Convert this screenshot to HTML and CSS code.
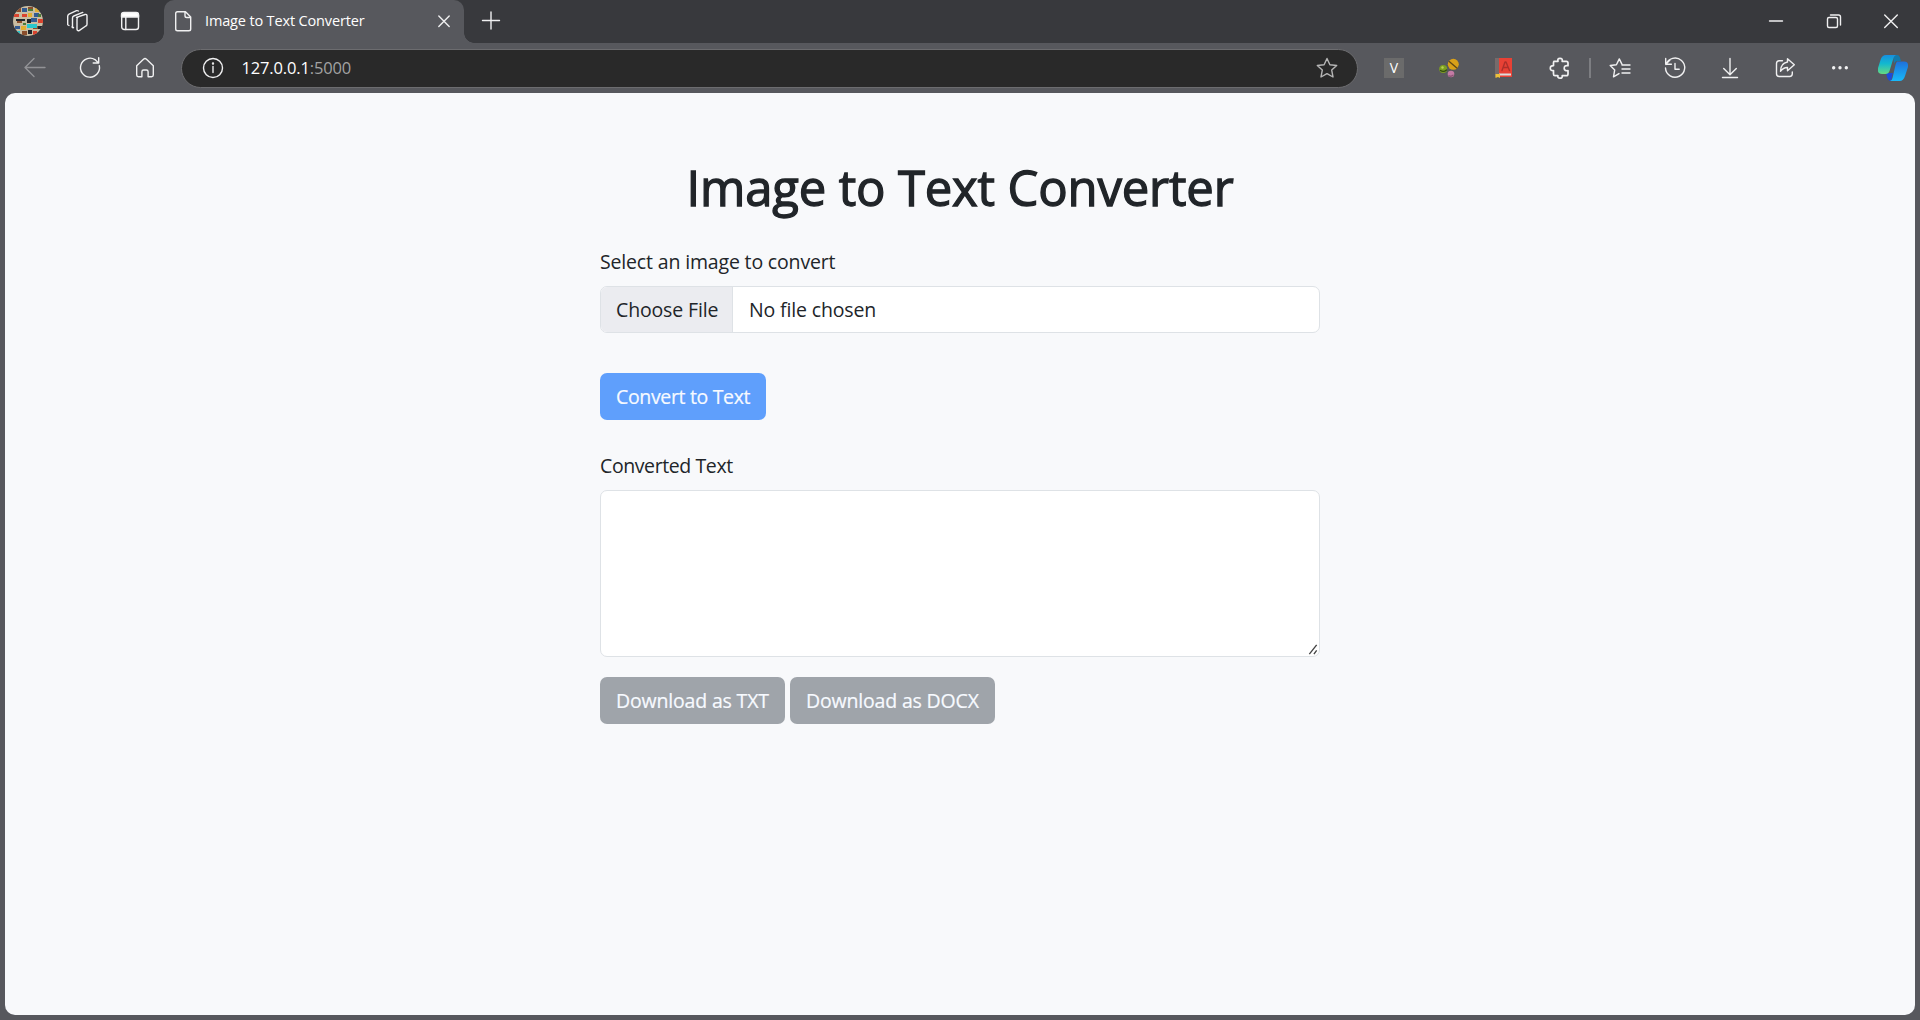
FILE: index.html
```html
<!DOCTYPE html>
<html lang="en">
<head>
<meta charset="utf-8">
<title>Image to Text Converter</title>
<link rel="stylesheet" href="styles.css">
</head>
<body>
<header class="tabstrip">
  <div class="tools">
    <span class="cell avatar-cell"><svg class="avatar" viewBox="0 0 30 30"><defs><clipPath id="round"><circle cx="15" cy="15" r="15"/></clipPath></defs><g clip-path="url(#round)"><path fill="#c9bda2" d="M0 0h30v30H0z"/><path fill="#8a4d2b" d="M3 2h5v4H3zM15 1h5v4h-5zM4 13h5v4H4zM20 20h5v3h-5zM9 25h5v4H9z"/><path fill="#345b91" d="M9 2h5v4H9zM21 7h5v4h-5zM2 20h5v3H2zM18 12h6v4h-6z"/><path fill="#db432e" d="M9 8h5v3H9zM1 8h5v3H1zM25 13h5v4h-5zM20 25h4v4h-4z"/><path fill="#e2ae31" d="M15 7h4v4h-4zM8 20h5v4H8zM22 2h4v4h-4z"/><path fill="#29c6cd" d="M14 18h10v4H14zM3 25h4v3H3z"/><path fill="#20252b" d="M3 13h9v2H3zM14 13h4v4h-4zM15 24h4v4h-4zM25 20h4v3h-4z"/><path fill="#4b7b37" d="M15 3h5v2h-5zM10 17h3v2h-3zM25 8h3v3h-3z"/></g></svg></span>
    <span class="cell"><svg class="icon" viewBox="0 0 24 24"><path d="M11.5 8.3 20 5.500q2-.5 2 1.300v8.400q0 1.200-1.200 1.800l-6.300 4.300q-2 1.200-2.500-1V10q0-1.200 1-1.800M8.200 18.800l-.7-.5V9q0-1.500 1.300-2l9-3.600M4 16.500l-1.300-.8V7.300q0-1.500 1.300-2.200L11.500 1.700q1-.3 2 .3M8.500 18.500q-1 .5-1.500-.5"/></svg></span>
    <span class="cell"><svg class="icon" viewBox="0 0 24 24"><rect x="3.700" y="3.700" width="16.800" height="16.800" rx="2.500"/><path class="solid" d="M3.500 8V6q0-2.500 2.500-2.500h12q2.500 0 2.500 2.500v2z"/><path d="M7.800 8v12.500"/></svg></span>
  </div>
  <div class="tab">
    <svg class="icon" viewBox="0 0 24 24"><path d="M6.500 2.700h8l5.200 5.200v12q0 1.800-1.800 1.800H6.500q-1.800 0-1.800-1.800V4.500q0-1.800 1.800-1.800zM14 2.700v4q0 1.800 1.800 1.800h3.900"/></svg>
    <span class="tab-title">Image to Text Converter</span>
    <svg class="icon tab-close" viewBox="0 0 24 24"><path d="m6.800 7 10.400 10.400M17.200 7 6.800 17.400"/></svg>
  </div>
  <svg class="icon new-tab" viewBox="0 0 24 24"><path d="M3.500 11.500h17M12 3v17"/></svg>
  <div class="window-buttons">
    <svg class="icon" viewBox="0 0 24 24"><path d="M5.500 12h13"/></svg>
    <svg class="icon" viewBox="0 0 24 24"><rect x="5.500" y="8.500" width="10" height="10" rx="1.500"/><path d="M8.500 6h8q2 0 2 2v8"/></svg>
    <svg class="icon" viewBox="0 0 24 24"><path d="m5.700 5.900 12.600 12.600M18.300 5.900 5.700 18.500"/></svg>
  </div>
</header>
<nav class="toolbar">
  <span class="cell"><svg class="icon dim" viewBox="0 0 24 24"><path d="M22 11.500H3M11 2.500l-9 9 9 9"/></svg></span>
  <span class="cell"><svg class="icon" viewBox="0 0 24 24"><path d="M21.300 9.700A9.500 9.500 0 1 1 17 3.600L20.500 7M20.700 1.700V7h-5.500"/></svg></span>
  <span class="cell"><svg class="icon" viewBox="0 0 24 24"><path d="m3.700 9.700 6.800-6.500q1.500-1.300 3 0l6.800 6.500V19q0 1.700-1.700 1.700h-3.500v-5q0-1.700-1.700-1.700h-2.800q-1.700 0-1.700 1.700v5H5.400q-1.700 0-1.700-1.700z"/></svg></span>
  <div class="address">
    <svg class="icon" viewBox="0 0 24 24"><circle cx="12" cy="12" r="9.500"/><path d="M12 10.500v6"/><circle class="solid" cx="12" cy="7.500" r=".5"/></svg>
    <span class="url">127.0.0.1<span class="port">:5000</span></span>
    <svg class="icon star" viewBox="0 0 24 24"><path d="m12 2.500 2.900 6.200 6.800.8-5 4.600 1.300 6.900-6-3.400L6 21l1.300-6.900-5-4.600 6.800-.8z"/></svg>
  </div>
  <span class="cell"><span class="v-badge">V</span></span>
  <span class="cell"><svg class="icon art" viewBox="0 0 24 24"><circle cx="16.300" cy="8.300" r="5.500" fill="#daa018"/><path d="m12.200 5.500 7.600 6.500" stroke="#604816"/><circle cx="6.200" cy="13" r="4" fill="#7d9e20"/><path d="M3.500 14.500q3 2 6-.5" stroke="#304914"/><circle cx="5.500" cy="11.500" r="1.200" fill="#b8d152"/><circle cx="14" cy="18" r="3.300" fill="#c47ba5"/><path d="M12 19.800q2.500 1 4-.5" stroke="#8d5474"/></svg></span>
  <span class="cell"><svg class="icon art" viewBox="0 0 24 24"><path fill="#766b6b" d="M3 2h4v19H3z"/><path fill="#e84135" d="M7 2h13v19H7z"/><path fill="#ddd" d="M7 17.500h12v2H7z"/><path d="M10 14.500 13 6h1l3.500 8.500M11.500 11.500h4.500" stroke="#ad2f2a"/><path fill="#edc039" d="M3.500 18H8v4l-2-1-2.500 1z"/></svg></span>
  <span class="cell"><svg class="icon puzzle" viewBox="0 0 24 24"><path stroke-width="1.700" d="M6 5.300h4q-.8-3 2-3t2.200 3h4.100q1.700 0 1.700 1.700v2.700q-3.800-.5-3.800 2.500t3.800 2.500V18q0 1.700-1.700 1.700h-4.100q.5 2.500-2.200 2.500t-2-2.500H7q-1.500 0-1.500-1.700v-3.500q-3.200.3-3.200-2.300t3.200-2.500V7q0-1 .5-1.700z"/></svg></span>
  <span class="divider"></span>
  <span class="cell"><svg class="icon" viewBox="0 0 24 24"><path d="m14 8.400-2.700-5.500-2.900 5.800-6.200.8 4.500 4.400-1.200 6.900q4-2.200 5.500-3.200M14 9h8M14 13h8M14 17h8"/></svg></span>
  <span class="cell"><svg class="icon" viewBox="0 0 24 24"><path d="M3 8.500A9.600 9.600 0 1 1 2.500 12M2.700 2.500v5.700h5.700M3 8l4-4M12 7.500v5.800h4.200"/></svg></span>
  <span class="cell"><svg class="icon" viewBox="0 0 24 24"><path d="M12 2.500v16M5.700 12.500l6.300 6.300 6.300-6.300M4.500 21.500h15"/></svg></span>
  <span class="cell"><svg class="icon" viewBox="0 0 24 24"><path d="M9.500 4.700H6.200Q3.500 4.700 3.500 7.400v10.400q0 2.700 2.700 2.700h10.400q2.700 0 2.700-2.700V16M14.500 6V2.800l6.800 6-6.800 6v-3.300q-4-.2-7 3.800 0-8 7-9.300z"/></svg></span>
  <span class="cell"><svg class="icon" viewBox="0 0 24 24"><g class="solid"><circle cx="5.700" cy="11.700" r="1"/><circle cx="12" cy="11.700" r="1"/><circle cx="18.300" cy="11.700" r="1"/></g></svg></span>
  <svg class="copilot" viewBox="0 0 30 28"><defs><linearGradient id="leaf" x1="0" y1="0" x2="0" y2="1"><stop stop-color="#168fe0"/><stop offset=".45" stop-color="#12b8cf"/><stop offset="1" stop-color="#65d982"/></linearGradient><linearGradient id="wing" x1="0" y1="0" x2="0" y2="1"><stop stop-color="#1e70db"/><stop offset="1" stop-color="#18bafa"/></linearGradient></defs><path fill="#127aad" d="M15 1h4q2 0 2.700 2L23 7h-4q-2 0-3 3z"/><path fill="#1d4bd8" d="M8 19h7l-2 8q-3 0-4-4z"/><path fill="url(#leaf)" d="M8 1h10q-2 1-2.500 3l-4 13q-1 3-4 3H4q-5 0-4-6l2.500-8Q4 1 8 1z"/><path fill="url(#wing)" d="M19 7.500h7q5 0 3.800 6L27 22q-1.500 5-5.500 5H12q2-.5 2.500-3l3-13q.5-2.500 1.500-3.500z"/></svg>
</nav>
<div class="viewport">
  <main class="converter">
    <h1>Image to Text Converter</h1>
    <div class="label select-label">Select an image to convert</div>
    <div class="file-input"><span class="choose">Choose File</span><span class="filename">No file chosen</span></div>
    <button class="btn convert" disabled>Convert to Text</button>
    <div class="label converted-label">Converted Text</div>
    <div class="textarea"><svg class="grip" viewBox="0 0 10 12"><path d="m1 11 8-10M6 11l3-4" stroke="#444" stroke-width="1.500" fill="none"/></svg></div>
    <div class="downloads"><button class="btn secondary txt" disabled>Download as TXT</button><button class="btn secondary docx" disabled>Download as DOCX</button></div>
  </main>
</div>
</body>
</html>
```
FILE: styles.css
```css
* { box-sizing: border-box; }
body { margin: 0; height: 1020px; display: flex; flex-direction: column; background: #57585d; font-family: "Open Sans", "Noto Sans", sans-serif; color: #212529; overflow: hidden; }
.icon { width: 24px; height: 24px; flex: none; fill: none; stroke: #f0f0f1; stroke-width: 1.4; stroke-linejoin: round; stroke-linecap: round; }
.icon .solid { fill: #fff; }
.art { stroke: none; }
.dim { stroke: #929296; }
.tabstrip { height: 43px; flex: none; display: flex; align-items: center; padding-bottom: 1px; background: #38393d; color: #fff; }
.tools { width: 164px; display: flex; padding-left: 1px; }
.cell { width: 55px; flex: none; display: flex; align-items: center; justify-content: center; }
.tools .cell { width: 52.500px; }
.tools .avatar-cell { width: 50px; padding-left: 4px; }
.avatar { width: 30px; height: 30px; }
.tab { position: relative; width: 300px; height: 43px; margin-bottom: -1px; padding: 0 8px 1px 7px; display: flex; align-items: center; background: #57585d; border-radius: 10px 10px 0 0; }
.tab::before, .tab::after { content: ""; position: absolute; bottom: 0; width: 10px; height: 10px; }
.tab::before { left: -10px; background: radial-gradient(circle at 0 0, #38393d 9.5px, #57585d 10px); }
.tab::after { right: -10px; background: radial-gradient(circle at 100% 0, #38393d 9.5px, #57585d 10px); }
.tab-title { margin-left: 10px; font-size: 14.500px; letter-spacing: -.15px; line-height: 20px; padding-bottom: 1px; white-space: nowrap; }
.tab-close { margin-left: auto; }
.new-tab { margin-left: 14.500px; }
.window-buttons { margin-left: auto; margin-right: 17px; display: flex; gap: 33.500px; }
.toolbar { height: 50px; flex: none; display: flex; align-items: center; padding-left: 7.500px; }
.address { width: 1177px; height: 39px; margin: 0 9px 0 8px; padding: 0 18px 0 19px; display: flex; align-items: center; background: #292929; border: 1px solid #6c6c6f; border-radius: 20px; }
.url { margin-left: 17px; padding-bottom: 2px; color: #fff; font-size: 16.500px; letter-spacing: -.15px; }
.port { color: #a2a2a2; }
.star { margin-left: auto; stroke: #b5b5b5; }
.v-badge { width: 20px; height: 20px; background: #6b6b6b; color: #fff; font-size: 14px; line-height: 20px; text-align: center; }
.puzzle { margin-left: 1px; }
.divider { width: 2px; height: 20px; margin: 0 2px; background: #7d7e82; }
.copilot { width: 30px; height: 28px; margin-left: 10px; }
.viewport { height: 922px; margin: 0 5px; padding-top: 65px; background: #f8f9fb; border-radius: 10px; }
.converter { width: 720px; margin: 0 auto; }
h1 { margin: 0; height: 60px; line-height: 58px; font-size: 49px; font-weight: 500; -webkit-text-stroke: 1.300px #212529; letter-spacing: -.15px; text-align: center; white-space: nowrap; }
.label { height: 30px; line-height: 30px; font-size: 19.500px; white-space: nowrap; }
.select-label { margin: 29px 0 9px; letter-spacing: -.16px; }
.file-input { height: 47px; display: flex; line-height: 45px; font-size: 19.500px; letter-spacing: -.15px; background: #fff; border: 1px solid #dee2e6; border-radius: 7px; overflow: hidden; white-space: nowrap; }
.choose { width: 132px; padding-left: 15px; background: #ebecf0; border-right: 1px solid #dee2e6; }
.filename { padding-left: 16px; }
.btn { display: block; height: 47px; padding: 0 0 0 16px; border: 0; border-radius: 7px; font: 19.500px/47px "Open Sans", sans-serif; text-align: left; white-space: nowrap; color: #f7faff; -webkit-text-stroke: .2px #f7faff; }
.convert { width: 166px; margin-top: 40px; background: #5f9ffc; letter-spacing: -.34px; }
.converted-label { margin: 31px 0 9px; letter-spacing: -.4px; }
.textarea { height: 167px; display: flex; align-items: flex-end; justify-content: flex-end; padding: 1px; background: #fff; border: 1px solid #dee2e6; border-radius: 7px; }
.grip { width: 10px; height: 11px; }
.downloads { display: flex; gap: 5px; margin-top: 20px; }
.secondary { background: #9fa4aa; letter-spacing: -.17px; }
.txt { width: 185px; }
.docx { width: 205px; }
```
